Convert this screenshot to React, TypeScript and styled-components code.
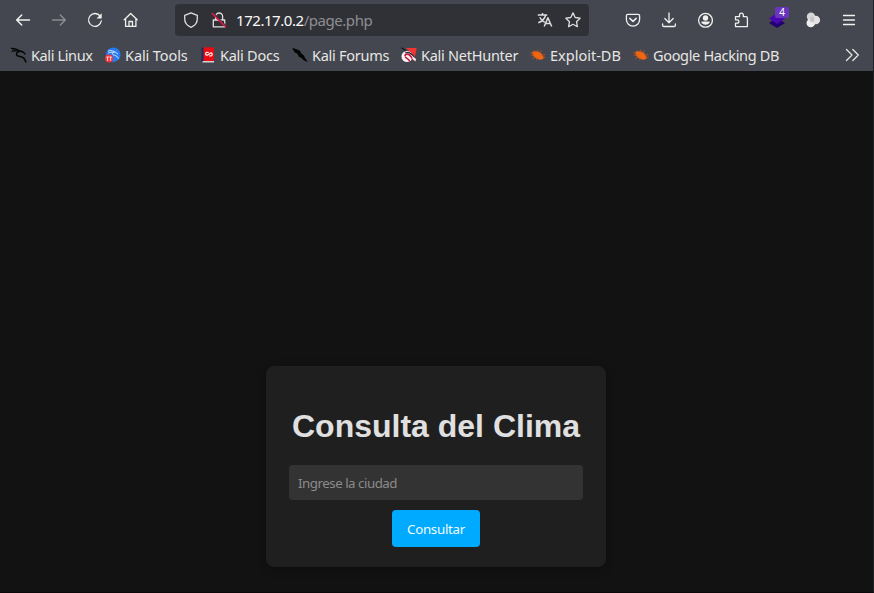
import React from 'react';
import styled, { createGlobalStyle } from 'styled-components';

const GlobalStyle = createGlobalStyle`
  * { box-sizing: border-box; }
  html, body, #root { margin: 0; height: 100%; }
  body { background: #121212; overflow: hidden; font-family: "Noto Sans", sans-serif; }
`;

const Window = styled.div`
  display: flex;
  flex-direction: column;
  width: 874px;
  height: 593px;
  border-right: 1px solid #20222b;
  border-bottom: 1px solid #0b080a;
  background: #121212;
`;

const Toolbar = styled.div`
  display: flex;
  align-items: center;
  height: 40px;
  flex: none;
  padding-left: 5px;
  background: #44474f;
  color: #f0f0ef;
`;

const ToolButton = styled.button<{ $dim?: boolean }>`
  display: flex;
  align-items: center;
  justify-content: center;
  width: 36px;
  height: 36px;
  flex: none;
  padding: 0;
  border: 0;
  background: none;
  color: ${(p) => (p.$dim ? '#8b8d92' : 'inherit')};
`;

const AddressBar = styled.div`
  display: flex;
  align-items: center;
  width: 414px;
  height: 32px;
  margin-left: 26px;
  padding: 0 2px;
  border-radius: 4px;
  background: #303137;
  color: #dedede;
`;

const AddressIcon = styled.span`
  display: flex;
  justify-content: center;
  width: 28px;
  flex: none;
`;

const Url = styled.span`
  flex: 1;
  padding-left: 3px;
  font-size: 15px;
  line-height: 22px;
  letter-spacing: -0.45px;
  color: #8d8e92;
`;

const Host = styled.span`
  color: #fbfbfb;
`;

const Actions = styled.div`
  display: flex;
  margin-left: 26px;
`;

const Bookmarks = styled.nav`
  display: flex;
  align-items: center;
  height: 31px;
  flex: none;
  padding: 0 0 1px 11px;
  background: #44474f;
  color: #e6e6e4;
`;

const Bookmark = styled.a<{ $width: number; $spacing: number }>`
  display: flex;
  align-items: center;
  gap: 4px;
  width: ${(p) => p.$width}px;
  flex: none;
  font-size: 14.5px;
  line-height: 20px;
  letter-spacing: ${(p) => p.$spacing}px;
  white-space: nowrap;
  svg { flex: none; }
`;

const Overflow = styled.span`
  display: flex;
  margin-left: auto;
  padding-right: 13px;
`;

const Page = styled.main`
  display: flex;
  flex: 1;
  flex-direction: column;
  align-items: center;
  justify-content: flex-end;
  padding: 0 1px 25px 0;
`;

const Card = styled.form`
  display: flex;
  flex-direction: column;
  align-items: center;
  width: 340px;
  height: 201px;
  padding-top: 42px;
  border-radius: 8px;
  background: #1f1f1f;
  box-shadow: 0 2px 10px rgba(0, 0, 0, 0.3);
`;

const Title = styled.h1`
  margin: 0 0 21px;
  font: bold 32px/36px "Liberation Sans", sans-serif;
  color: #e0e0e0;
  white-space: nowrap;
`;

const CityInput = styled.input`
  width: 294px;
  height: 35px;
  padding: 1px 9px 0;
  border: 0;
  border-radius: 4px;
  background: #333;
  font: 13.333px "Noto Sans", sans-serif;
  letter-spacing: -0.49px;
  color: #e0e0e0;
  &::placeholder { color: #8b8b8b; opacity: 1; }
`;

const Submit = styled.button`
  width: 88px;
  height: 37px;
  margin-top: 10px;
  padding: 1px 0 0;
  border: 0;
  border-radius: 4px;
  background: #00aaff;
  color: #f2faff;
  font: 13.333px "Noto Sans", sans-serif;
  letter-spacing: -0.3px;
`;

type IconProps = { children: React.ReactNode };

const Icon = ({ children }: IconProps) => (
  <svg width="16" height="16" viewBox="0 0 16 16" fill="none" stroke="currentColor" strokeWidth="1.3" strokeLinecap="round" strokeLinejoin="round">
    {children}
  </svg>
);

const BackIcon = () => <Icon><path d="M14.500 8H1.800M6.700 3 1.700 8l5 5" strokeWidth="1.5" /></Icon>;
const ForwardIcon = () => <Icon><path d="M1.500 8h12.700M9.300 3l5 5-5 5" strokeWidth="1.4" /></Icon>;
const ReloadIcon = () => (
  <Icon><path d="M13.200 4.200A6.400 6.400 0 1 0 14.300 9" /><path d="M14.700 1.200v5.200H9.500z" fill="currentColor" stroke="none" /></Icon>
);
const HomeIcon = () => (
  <Icon><path d="m1.200 7.800 6.500-6.300 6.500 6.300M2.600 6.800v7.600h10.300V6.800M6 14.300V9.500h3.500v4.800" /></Icon>
);
const ShieldIcon = () => (
  <Icon><path d="m8 .8 6.300 2.500v3.500c0 3.800-2.400 7-6.300 8.500-3.900-1.500-6.300-4.700-6.300-8.500V3.300z" /></Icon>
);
const InsecureIcon = () => (
  <Icon>
    <path d="M2.300 8h11.400v6.800H2.300zM4.600 8V4.500a3.500 3.500 0 0 1 7 0V8" />
    <path d="m2 1 13 13" stroke="#303137" strokeWidth="1.500" />
    <path d="m1.300 1.500 13.200 13.200" stroke="#ee1748" strokeWidth="1.500" />
  </Icon>
);
const TranslateIcon = () => (
  <Icon><path d="M.8 3h9.400M5.500 1v2M8.700 3C7.800 6.400 4.800 9.500 1.300 10.800M2.800 5.200c1.200 2.600 3 4.300 5 5.200M7.200 14.500l3.700-8.700 3.800 8.700M8.500 11.500h5" strokeWidth="1.5" strokeLinecap="butt" /></Icon>
);
const StarIcon = () => (
  <Icon><path d="m8 .9 2.200 4.600 4.900.7-3.600 3.500.9 5L8 12.300l-4.400 2.400.9-5L.9 6.200l4.900-.7z" /></Icon>
);
const PocketIcon = () => (
  <Icon><path d="M2.800 2.300h10.400c.8 0 1.400.6 1.400 1.400v3.800a6.600 6.600 0 0 1-13.200 0V3.700c0-.8.6-1.400 1.400-1.400z" /><path d="M4.800 6.400 8 9.400l3.200-3" strokeWidth="1.5" /></Icon>
);
const DownloadIcon = () => (
  <Icon><path d="M8 .9v9.600M3.800 6.500 8 10.700l4.200-4.200M1.600 12v1.200c0 .8.500 1.300 1.300 1.300h10.200c.8 0 1.300-.5 1.300-1.300V12" /></Icon>
);
const AccountIcon = () => (
  <Icon>
    <circle cx="8.500" cy="8.300" r="6.900" />
    <g fill="currentColor" stroke="none">
      <circle cx="8.500" cy="6" r="2.700" />
      <path d="M4.200 10c.4-.3.8-.4 1.200-.4h6.200c.4 0 .8.1 1.200.4-.7 1.700-2.300 2.800-4.300 2.800S4.900 11.700 4.200 10z" />
    </g>
  </Icon>
);
const ExtensionIcon = () => (
  <Icon><path d="M2.500 6.500V4.700h4V3a1.900 1.900 0 0 1 3.800 0v1.700h2.900c.7 0 1.200.5 1.200 1.200v8.700H2.500v-3.400h1.700a1.700 1.700 0 0 0 0-3.400H2.500z" /></Icon>
);
const MenuIcon = () => <Icon><path d="M2.500 3.500h11M2.500 8h11M2.500 12.500h11" /></Icon>;
const ChevronsIcon = () => <Icon><path d="m2.500 2.500 5.500 5.500-5.500 5.500M8.800 2.500 14.300 8l-5.500 5.500" /></Icon>;

const LayersIcon = () => (
  <svg width="18" height="18" viewBox="0 0 18 18">
    <path d="m9 7 8 5-8 5-8-5z" fill="#230071" />
    <path d="m9 2 8 5.500-8 5.500-8-5.500z" fill="#4a08b0" />
  </svg>
);

const BubblesIcon = () => (
  <svg width="16" height="16" viewBox="0 0 16 16">
    <circle cx="6" cy="4.800" r="4.200" fill="#d7d7d7" />
    <circle cx="5.800" cy="11" r="4.300" fill="#eee" />
    <circle cx="10.800" cy="8" r="4.300" fill="#e3e3e3" />
    <path d="M7 4.300c2 .5 3 2 2.300 4S7.500 11 5 9.500c-.8-2 .3-4.500 2-5.200z" fill="#c6c6c6" />
  </svg>
);

const BadgedButton = styled(ToolButton)`
  position: relative;
`;

const Badge = styled.span`
  position: absolute;
  top: 5px;
  left: 16px;
  width: 14px;
  height: 11px;
  border-radius: 2px;
  background: #6836bc;
  color: #fff;
  font: 10px/11px "Noto Sans", sans-serif;
  text-align: center;
`;

const KaliIcon = () => (
  <svg width="16" height="16" viewBox="0 0 16 16" fill="none" stroke="#070707" strokeLinecap="round" strokeLinejoin="round">
    <path d="M.5 1.300c3 0 6 .7 8.500 2.900l3.300.8 1.700 2" strokeWidth="1.300" />
    <path d="M1 4.700c2-1 4.500-1 6.500-.6M1.500 3l4 .5" strokeWidth="1" />
    <path d="M11 4.600C8.500 3.800 5.500 5 5.500 7.200c0 2.500 3.500 2 5.800 3 2 .8 3 2.500 3.500 4.800" strokeWidth="1.500" />
  </svg>
);

const ToolsIcon = () => (
  <svg width="16" height="16" viewBox="0 0 16 16">
    <circle cx="8.300" cy="7.700" r="7.200" fill="#267bf2" />
    <path d="M3 4c3-1 6 0 7.500 1.300M3.200 6.200c2-1.200 4.300-1.200 6-.6M10.500 5.300c-2.500-.8-4 1-2.500 2.400 1.500 1 4.500.7 5.500 4M10.500 5.300l2.500 1.800" fill="none" stroke="#cce3ff" strokeWidth="1" />
    <circle cx="4" cy="11.500" r="4" fill="#f43136" />
    <path d="M1.300 10h2.600M2.600 10v4M4.300 10h2.600M5.600 10v4" stroke="#fff" strokeWidth=".8" />
  </svg>
);

const DocsIcon = () => (
  <svg width="16" height="16" viewBox="0 0 16 16">
    <path d="M1.500.5H4V15H1.500z" fill="#152d61" />
    <path d="M3.500.3H14V14H3.500z" fill="#e90b13" />
    <path d="M2.500 14H14v1.500H2.500z" fill="#d8d3d5" />
    <path d="M6.500 5.300c-1.800 1.500-.8 3.500 1.200 2.700l2.500-1.800c1.800-.8 2.700 1 1.300 2.800M6.500 5.300l2.300.2M11.500 9l-2.300-.2" fill="none" stroke="#fff" strokeWidth="1.200" />
  </svg>
);

const ForumsIcon = () => (
  <svg width="16" height="16" viewBox="0 0 16 16">
    <path d="m.2.700 4.300 1.600 3.500 1.500 1.300 2.700 2.700 2 .7 2 3.300 4.500-4-1.500-2.500-2.500-3-1.500-.8-2.500L2.500 5.200z" fill="#050505" />
  </svg>
);

const NetHunterIcon = () => (
  <svg width="16" height="16" viewBox="0 0 16 16">
    <path d="M5 .9h10.700l-2 9.500z" fill="#f33434" />
    <path d="m.5.7 4.500 3" stroke="#17171a" strokeWidth="1.200" />
    <circle cx="6" cy="9.500" r="5.500" fill="#f4f4f5" />
    <path d="M4 6c4-1.300 7.200 1 9.500 4.500" fill="none" stroke="#191b21" strokeWidth="1.200" />
    <path d="M4 9c0-2.300 3.800-2.500 5.700.2L13 13.500" fill="none" stroke="#c81235" strokeWidth="1.600" />
    <path d="M4.200 9.500c.5 2.300 3.500 1.500 4.500 5" fill="none" stroke="#c81235" strokeWidth="1.500" />
    <path d="m11 8.500 4 3.500-.5 2.500-3-2.500z" fill="#eee" />
  </svg>
);

const BugIcon = () => (
  <svg width="16" height="16" viewBox="0 0 16 16">
    <path d="M2 5.700c1.700-2.200 7-1.900 10.300 1.900l1.700 3.700-3 1.500c-4-.5-8.300-2.600-9-7.100z" fill="#f26611" />
    <path d="M.3 5.500 4 6.800M3.500 3.200l2 2.300M7.500 2.500l.8 3M11 3.200l-.6 3.500M.5 8.300l3.800-.3M2 12 5.700 9.500M6.500 13.500l1-3M11.500 8.500l3.800-1M12.500 10.500l3-.3" stroke="#b65624" strokeWidth=".8" />
  </svg>
);

const bookmarks = [
  { label: 'Kali Linux', width: 94, spacing: -0.37, icon: <KaliIcon /> },
  { label: 'Kali Tools', width: 95, spacing: -0.1, icon: <ToolsIcon /> },
  { label: 'Kali Docs', width: 92, spacing: -0.25, icon: <DocsIcon /> },
  { label: 'Kali Forums', width: 109, spacing: -0.27, icon: <ForumsIcon /> },
  { label: 'Kali NetHunter', width: 129, spacing: -0.26, icon: <NetHunterIcon /> },
  { label: 'Exploit-DB', width: 103, spacing: 0, icon: <BugIcon /> },
  { label: 'Google Hacking DB', width: 150, spacing: -0.33, icon: <BugIcon /> },
];

export default function App() {
  return (
    <Window>
      <GlobalStyle />
      <Toolbar>
        <ToolButton><BackIcon /></ToolButton>
        <ToolButton $dim><ForwardIcon /></ToolButton>
        <ToolButton><ReloadIcon /></ToolButton>
        <ToolButton><HomeIcon /></ToolButton>
        <AddressBar>
          <AddressIcon><ShieldIcon /></AddressIcon>
          <AddressIcon><InsecureIcon /></AddressIcon>
          <Url><Host>172.17.0.2</Host>/page.php</Url>
          <AddressIcon><TranslateIcon /></AddressIcon>
          <AddressIcon><StarIcon /></AddressIcon>
        </AddressBar>
        <Actions>
          <ToolButton><PocketIcon /></ToolButton>
          <ToolButton><DownloadIcon /></ToolButton>
          <ToolButton><AccountIcon /></ToolButton>
          <ToolButton><ExtensionIcon /></ToolButton>
          <BadgedButton><LayersIcon /><Badge>4</Badge></BadgedButton>
          <ToolButton><BubblesIcon /></ToolButton>
          <ToolButton><MenuIcon /></ToolButton>
        </Actions>
      </Toolbar>
      <Bookmarks>
        {bookmarks.map((b) => (
          <Bookmark key={b.label} $width={b.width} $spacing={b.spacing}>{b.icon}{b.label}</Bookmark>
        ))}
        <Overflow><ChevronsIcon /></Overflow>
      </Bookmarks>
      <Page>
        <Card>
          <Title>Consulta del Clima</Title>
          <CityInput placeholder="Ingrese la ciudad" />
          <Submit type="button">Consultar</Submit>
        </Card>
      </Page>
    </Window>
  );
}
